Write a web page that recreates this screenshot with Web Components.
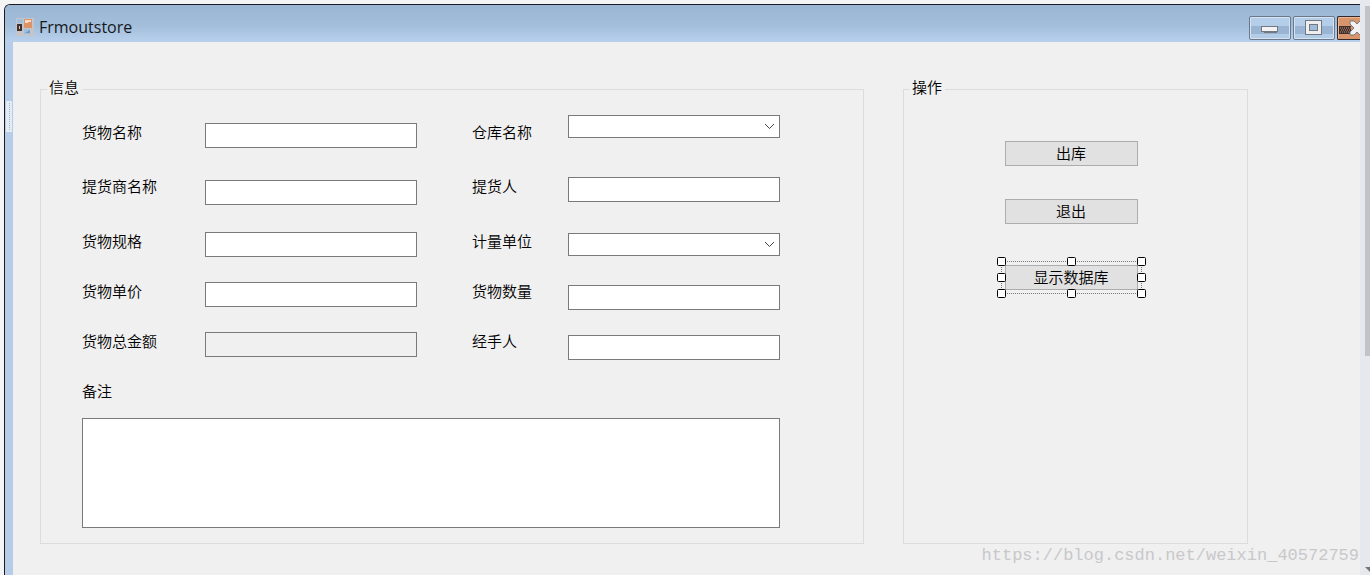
<!DOCTYPE html>
<html lang="zh-CN">
<head>
<meta charset="utf-8">
<title>Frmoutstore</title>
<style>
  html { height: 100%; }
  body { margin: 0; height: 100%; overflow: hidden; background: #f5f5f5; color: #000;
    font: 350 15px/18px "Noto Sans CJK SC", sans-serif; }
</style>
</head>
<body>
<designer-shell>
  <form-window>
    <span slot="heading">Frmoutstore</span>
    <group-box caption="信息">
      <store-form></store-form>
    </group-box>
    <group-box caption="操作">
      <action-list>
        <push-button>出库</push-button>
        <push-button>退出</push-button>
        <selection-frame><push-button>显示数据库</push-button></selection-frame>
      </action-list>
    </group-box>
  </form-window>
  <scroll-rail slot="rail"></scroll-rail>
  <water-mark slot="mark">https://blog.csdn.net/weixin_40572759</water-mark>
</designer-shell>

<script>
const define = (name, html, setup) => {
  const template = document.createElement('template');
  template.innerHTML = html;
  customElements.define(name, class extends HTMLElement {
    constructor() {
      super();
      this.attachShadow({ mode: 'open' }).append(template.content.cloneNode(true));
    }
    connectedCallback() { if (setup) setup(this, this.shadowRoot); }
  });
};

define('designer-shell', `
  <style>
    :host { display: flex; position: relative; height: 100vh; overflow: hidden; }
    main { flex: 1; min-width: 0; display: flex; padding: 4px 0 0 4px; overflow: hidden; }
    main ::slotted(*) { flex: 1; min-width: 0; }
  </style>
  <main><slot></slot></main><slot name="rail"></slot><slot name="mark"></slot>`);

define('form-window', `
  <style>
    :host { display: flex; flex-direction: column; position: relative; overflow: hidden;
      background: #b5cde8; border: solid #1c1c20; border-width: 1px 0 0 1px;
      border-radius: 6px 0 0 0; }
    .client { flex: 1; margin-left: 8px; padding: 36px 112px 0 27px; background: #f0f0f0;
      display: grid; grid-template-columns: 824fr 345fr; column-gap: 39px; align-content: start; }
    .grip { position: absolute; left: 1px; top: 96px; width: 6px; height: 31px; background: #e3ebf5; }
    .grip::after { content: ""; display: block; width: 0; height: 27px; margin: 2px 3px;
      border-left: 1px dotted #a3b7cf; }
  </style>
  <title-bar><slot name="heading"></slot></title-bar>
  <div class="client"><slot></slot></div>
  <div class="grip"></div>`);

define('title-bar', `
  <style>
    :host { display: flex; align-items: center; height: 37px; padding-left: 11px;
      background: linear-gradient(#9ab6d3, #a3bedb 55%, #b8d0ec); }
    .icon { width: 18px; height: 18px; margin: 6px 5px 0 0; }
    h1 { flex: 1; margin: 0; padding-top: 6px; color: #16181c;
      font: 400 16px/22px "Open Sans", "Noto Sans", sans-serif; }
    .controls { display: flex; gap: 2px; padding-top: 8px; }
    button { box-sizing: border-box; width: 42px; height: 24px; padding: 0; border: 1px solid #6b7889;
      border-radius: 2px; overflow: hidden; box-shadow: inset 0 0 0 1px #d5e3f3;
      background: linear-gradient(#b4cde8 0 9px, #9ab5d3 9px 17px, #b2cbe7 17px); }
    button svg { display: block; }
    .close { width: 23px; border-color: #33292d; border-right: 0; border-radius: 2px 0 0 2px;
      background: #d8946a; box-shadow: inset 1px 1px #ebb795; }
  </style>
  <svg class="icon" viewBox="0 0 18 18" aria-hidden="true">
    <rect width="18" height="18" fill="#c3c5ca"/>
    <path d="M1 1h6v4H1zM8 11h6v5H8z" fill="#9ebfdd"/><path d="M9 15l5-3v3z" fill="#6f9ac4"/>
    <path d="M1 6h5v7H1z" fill="#40312f"/><path d="M3 8h1v3H3z" fill="#e4c7b2"/>
    <path d="M8 1h8v9H8z" fill="#dc9467"/><path d="M9 2h6v2h-3v1H9z" fill="#f4ddce"/>
  </svg>
  <h1><slot></slot></h1>
  <div class="controls">
    <button aria-label="最小化"><svg width="40" height="22" viewBox="0 0 40 22">
      <path d="M11 9h17v6h-1v1H14v-1h-3z" fill="#737880"/><path d="M12 10h15v4H12z" fill="#f3f3f3"/></svg></button>
    <button aria-label="最大化"><svg width="40" height="22" viewBox="0 0 40 22">
      <rect x="11.500" y="3.500" width="16" height="14" fill="#eeeeef" stroke="#737880"/>
      <rect x="15.500" y="7.500" width="8" height="6" fill="#9ebbd9" stroke="#737880"/></svg></button>
    <button class="close" aria-label="关闭"><svg width="22" height="22" viewBox="0 0 22 22">
      <path d="M1 9h12v8H1z" fill="#40302f"/>
      <path d="M2 11h11M3 13h10M2 15h11" stroke="#c59072" stroke-dasharray="1 1"/>
      <path d="M12 4h4l3 3 3-3h4v3l-4 4 4 4v3h-4l-3-3-3 3h-4v-3l4-4-4-4z" fill="#f2f2f2" stroke="#77797f"/></svg></button>
  </div>`);

define('group-box', `
  <style>
    :host { display: block; }
    fieldset { box-sizing: border-box; height: 100%; min-width: 0; margin: 0; padding: 15px 0;
      border: 1px solid #dcdcdc; }
    legend { margin-left: 6px; padding: 0 3px 4px 2px; }
  </style>
  <fieldset><legend></legend><slot></slot></fieldset>`,
  (host, root) => { root.querySelector('legend').textContent = host.getAttribute('caption'); });

define('form-field', `
  <style>
    :host { display: flex; align-items: flex-start; }
    :host([middle]) label { align-self: center; }
    :host([place="end"]) .control { align-self: flex-end; }
    :host([place="center"]) .control { align-self: center; }
    label { flex: 0 0 var(--label); white-space: nowrap; }
    .control { flex: 1; min-width: 0; position: relative; display: flex; }
    input, select { box-sizing: border-box; width: 100%; height: 25px; margin: 0; padding: 0 4px;
      border: 1px solid #7a7a7a; border-radius: 0; background: #fff; font: inherit;
      appearance: none; outline: 0; }
    select { height: 23px; }
    input:read-only { background: #f0f0f0; }
    svg { position: absolute; right: 5px; top: 8px; pointer-events: none; }
  </style>
  <label for="control"></label><div class="control"></div>`,
  (host, root) => {
    const kind = host.getAttribute('kind');
    root.querySelector('label').textContent = host.getAttribute('label');
    root.querySelector('.control').innerHTML = kind === 'select'
      ? '<select id="control"></select><svg width="11" height="7" viewBox="0 0 11 7" aria-hidden="true"><path d="M1 1l4.500 4.500L10 1" fill="none" stroke="#444"/></svg>'
      : `<input id="control" type="text" ${kind === 'readonly' ? 'readonly' : ''}>`;
  });

define('store-form', `
  <style>
    :host { display: block; margin: 0 83px 0 41px; }
    .fields { display: grid; grid-template-columns: 335fr 308fr; column-gap: 55px;
      grid-template-rows: 62px 55px 50px 50px 50px; }
    .first { height: 33px; }
    .tall { height: 28px; }
    .short { height: 25px; }
    form-field { --label: 123px; }
    form-field:nth-child(even) { --label: 96px; }
    .note { display: block; }
    textarea { display: block; box-sizing: border-box; width: 100%; height: 110px; margin: 18px 0 0;
      padding: 3px; border: 1px solid #7a7a7a; border-radius: 0; background: #fff; resize: none;
      font: inherit; outline: 0; }
  </style>
  <div class="fields">
    <form-field class="first" place="end" middle label="货物名称"></form-field>
    <form-field class="first" place="start" middle kind="select" label="仓库名称"></form-field>
    <form-field class="tall" place="end" label="提货商名称"></form-field>
    <form-field class="tall" place="start" label="提货人"></form-field>
    <form-field class="short" place="center" label="货物规格"></form-field>
    <form-field class="short" place="center" kind="select" label="计量单位"></form-field>
    <form-field class="tall" place="start" label="货物单价"></form-field>
    <form-field class="tall" place="end" label="货物数量"></form-field>
    <form-field class="tall" place="start" kind="readonly" label="货物总金额"></form-field>
    <form-field class="tall" place="end" label="经手人"></form-field>
  </div>
  <label class="note" for="note">备注</label>
  <textarea id="note"></textarea>`);

define('action-list', `
  <style>
    :host { display: flex; flex-direction: column; align-items: center; gap: 33px;
      padding: 26px 8px 0 0; }
  </style>
  <slot></slot>`);

define('push-button', `
  <style>
    :host { display: block; }
    button { box-sizing: border-box; display: block; width: 133px; height: 25px; margin: 0;
      padding: 0 1px 2px 0; border: 1px solid #adadad; border-radius: 0; background: #e1e1e1;
      color: inherit; font: inherit; }
  </style>
  <button type="button"><slot></slot></button>`);

define('selection-frame', `
  <style>
    :host { display: grid; padding: 8px; position: relative; }
    svg { position: absolute; left: 0; top: 0; width: 149px; height: 41px; pointer-events: none; }
    rect { fill: #fff; stroke: #000; }
  </style>
  <slot></slot>
  <svg viewBox="0 0 149 41" aria-hidden="true">
    <path d="M4 4.500h141M4 36.500h141M4.500 4v33M144.500 4v33" fill="none" stroke="#777" stroke-dasharray="1 1"/>
    <g></g>
  </svg>`,
  (host, root) => {
    const spots = [[0, 0], [70, 0], [140, 0], [0, 16], [140, 16], [0, 32], [70, 32], [140, 32]];
    root.querySelector('g').innerHTML = spots
      .map(([x, y]) => `<rect x="${x + 0.5}" y="${y + 0.5}" width="8" height="8" rx="1"/>`).join('');
  });

define('scroll-rail', `
  <style>
    :host { display: flex; flex-direction: column; justify-content: space-between; align-items: flex-end;
      box-sizing: border-box; width: 10px; padding-top: 6px; background: #e7e8ee; }
    .thumb { width: 5px; height: 61.5%; background: #c2c3c9; }
    svg { display: block; }
  </style>
  <div class="thumb"></div>
  <svg width="5" height="8" viewBox="0 0 5 8" aria-hidden="true"><path d="M0 0h5v5z" fill="#75767c"/></svg>`);

define('water-mark', `
  <style>
    :host { display: block; position: absolute; right: 11px; bottom: 7px; color: #c8c8cb;
      font: 400 17px/24px "Liberation Mono", monospace; white-space: nowrap; }
  </style>
  <slot></slot>`);
</script>
</body>
</html>
